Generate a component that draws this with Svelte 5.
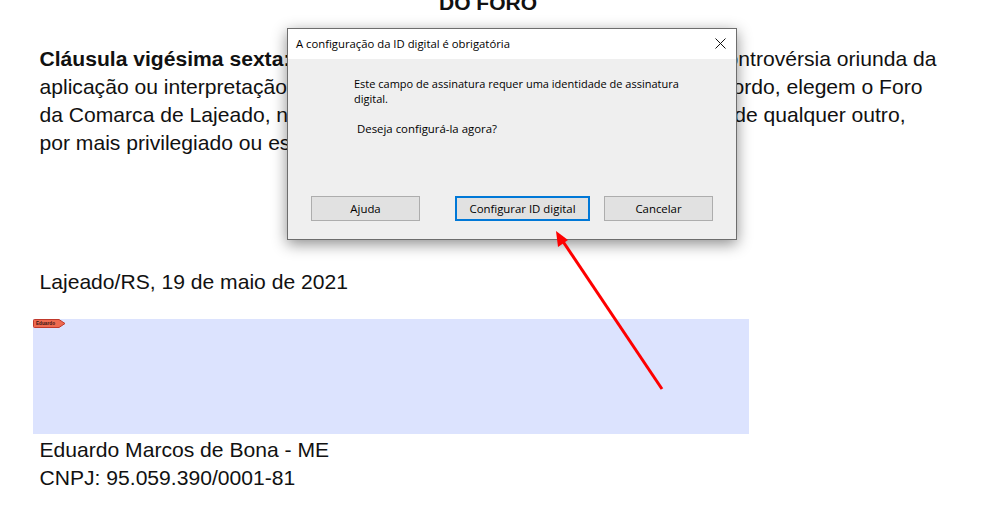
<script>
  let buttons = ["Ajuda", "Configurar ID digital", "Cancelar"];
  // the dialog covers the middle of each line, only the two ends are visible
  let lines = [
    { left: "Cláusula vigésima sexta:", right: "controvérsia oriunda da", width: 897, bold: true },
    { left: "aplicação ou interpretação deste", right: "acordo, elegem o Foro", width: 883 },
    { left: "da Comarca de Lajeado, neste", right: "de qualquer outro,", width: 866 },
    { left: "por mais privilegiado ou especial", right: "", width: 866 }
  ];
</script>

<style>
  :global(body) {
    background: #fff;
    overflow: hidden;
  }

  .page {
    position: relative;
    height: 531px;
    overflow: hidden;
    font-family: "Liberation Sans", Arial, sans-serif;
    font-size: 21.1px;
    line-height: 28px;
    color: #111;
  }

  h2 {
    margin: -9px 0 0;
    width: 976px;
    font-size: 21px;
    line-height: 24px;
    text-align: center;
  }

  .clause {
    margin: 30px 0 0 39.5px;
    white-space: nowrap;
  }

  .line {
    display: flex;
    justify-content: space-between;
  }

  .line .bold {
    font-weight: bold;
  }

  .date {
    margin: 111px 0 0 39.5px;
  }

  .sign-field {
    position: relative;
    margin: 23px 0 0 33px;
    width: 716px;
    height: 115px;
    background: #dce3fe;
  }

  .tag {
    position: absolute;
    left: 0;
    top: 0;
    display: block;
  }

  .tag text {
    font-size: 5px;
    font-weight: bold;
    fill: #3a1510;
  }

  .signer {
    margin: 2px 0 0 39.5px;
  }

  .dialog {
    position: absolute;
    left: 287px;
    top: 28px;
    width: 448px;
    height: 210px;
    display: flex;
    flex-direction: column;
    border: 1px solid #6d6d6d;
    background: #efefef;
    box-shadow: 0 4px 14px rgba(0, 0, 0, 0.45);
    font-family: "Open Sans", "Noto Sans", sans-serif;
    font-size: 11px;
    line-height: 15px;
    color: #000;
  }

  .title {
    height: 30px;
    display: flex;
    align-items: center;
    justify-content: space-between;
    padding: 0 8px 2px;
    box-sizing: border-box;
    background: #fff;
    font-size: 11.3px;
  }

  .close {
    display: block;
    margin-right: 2px;
  }

  .body {
    flex: 1;
    padding: 17px 40px 0 66px;
  }

  .body p {
    margin: 0;
  }

  .body .ask {
    margin: 15px 0 0 3px;
    font-size: 11.4px;
  }

  .actions {
    display: flex;
    padding: 0 23px 18px 23px;
  }

  button {
    width: 109px;
    height: 25px;
    padding: 0;
    border: 1px solid #adadad;
    background: #e1e1e1;
    font: inherit;
    font-size: 11.4px;
    color: #000;
  }

  button.primary {
    width: 135px;
    margin: 0 14px 0 35px;
    border: 2px solid #0078d7;
  }

  .arrow {
    position: absolute;
    left: 0;
    top: 0;
    pointer-events: none;
  }
</style>

<div class="page">
  <h2>DO FORO</h2>

  <div class="clause">
    {#each lines as line}
      <div class="line" style="width: {line.width}px">
        <span class:bold={line.bold}>{line.left}</span>
        <span>{line.right}</span>
      </div>
    {/each}
  </div>

  <p class="date">Lajeado/RS, 19 de maio de 2021</p>

  <div class="sign-field">
    <svg class="tag" width="33" height="9" viewBox="0 0 33 9">
      <path d="M1.5 .5H26L32 4.5L26 8.5H1.5Q.5 8.5 .5 7.5V1.5Q.5 .5 1.5 .5Z" fill="#ee6a50" stroke="#c0392b" />
      <text x="3" y="6.2" textLength="19" lengthAdjust="spacingAndGlyphs">Eduardo</text>
    </svg>
  </div>

  <p class="signer">Eduardo Marcos de Bona - ME<br />CNPJ: 95.059.390/0001-81</p>

  <div class="dialog">
    <div class="title">
      <span>A configuração da ID digital é obrigatória</span>
      <svg class="close" width="11" height="11" viewBox="0 0 11 11">
        <path d="M.5 .5L10.5 10.5M10.5 .5L.5 10.5" stroke="#111" fill="none" />
      </svg>
    </div>
    <div class="body">
      <p>Este campo de assinatura requer uma identidade de assinatura digital.</p>
      <p class="ask">Deseja configurá-la agora?</p>
    </div>
    <div class="actions">
      {#each buttons as label, i}
        <button class:primary={i === 1}>{label}</button>
      {/each}
    </div>
  </div>

  <svg class="arrow" width="998" height="531">
    <line x1="662" y1="389" x2="562" y2="240" stroke="#fe0000" stroke-width="3" />
    <path d="M556 231L568 240L558 247Z" fill="#fe0000" />
  </svg>
</div>
